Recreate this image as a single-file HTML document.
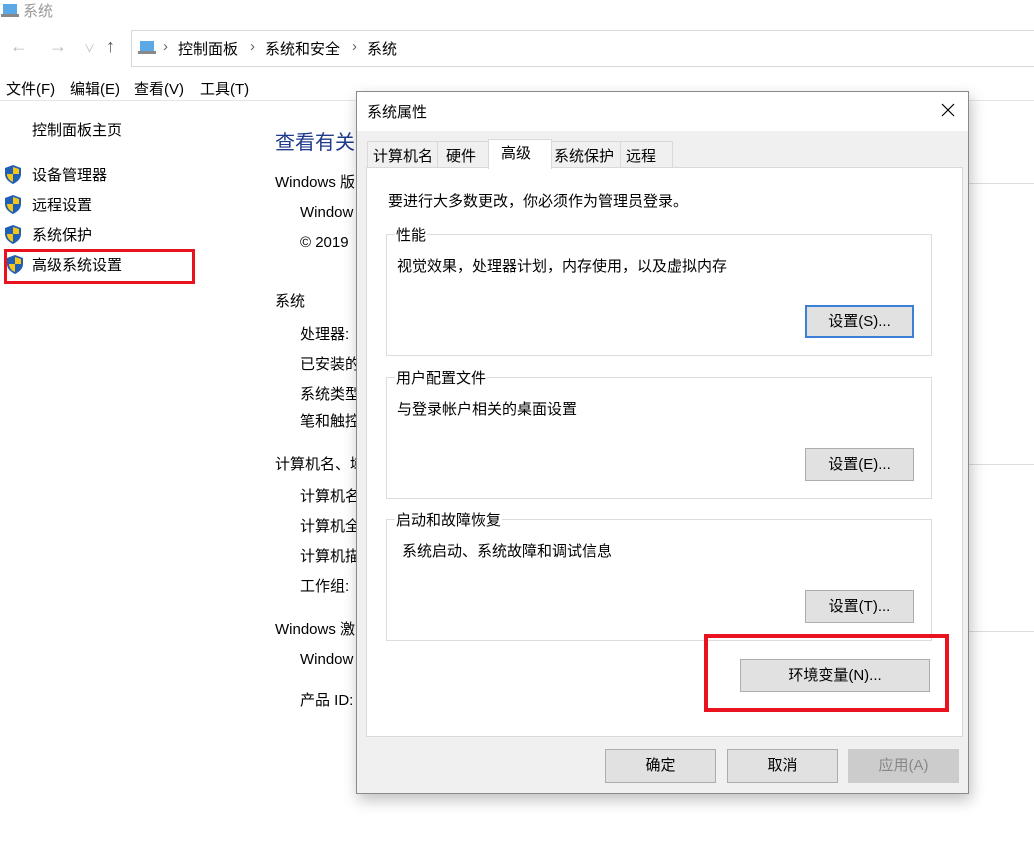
<!DOCTYPE html>
<html><head><meta charset="utf-8"><style>
*{margin:0;padding:0;box-sizing:border-box}
body{width:1034px;height:853px;background:#fff;position:relative;overflow:hidden;font-family:"Liberation Sans","Noto Sans CJK SC",sans-serif;font-size:15px;color:#000}
.a{position:absolute;white-space:nowrap}
.g{color:#999}
.btn{position:absolute;background:#e1e1e1;border:1px solid #adadad;text-align:center;font-size:15px}
.hl{position:absolute;height:1px;background:#ddd}
.grp{position:absolute;border:1px solid #dcdcdc}
.grp .lg{position:absolute;top:-11px;left:8px;background:#fff;padding:0 1px}
.shield{position:absolute;width:18px;height:20px}
</style></head><body>
<svg class="a" style="left:0;top:2px" width="22" height="18"><rect x="3" y="2" width="14" height="10" fill="#5aa9e6"/><rect x="1" y="12" width="18" height="3" fill="#888"/></svg>
<div class="a g" style="left:23px;top:0px">系统</div>
<div class="a" style="left:10px;top:36px;color:#bbb;font-size:18px">←</div>
<div class="a" style="left:49px;top:36px;color:#bbb;font-size:18px">→</div>
<div class="a" style="left:84px;top:40px;color:#bbb;font-size:11px">∨</div>
<div class="a" style="left:106px;top:36px;color:#555;font-size:18px">↑</div>
<div class="a" style="left:131px;top:30px;width:910px;height:37px;border:1px solid #d9d9d9"></div>
<svg class="a" style="left:136px;top:39px" width="22" height="18"><rect x="4" y="2" width="14" height="10" fill="#5aa9e6"/><rect x="2" y="12" width="18" height="3" fill="#888"/></svg>
<div class="a" style="left:163px;top:38px;color:#666">›</div>
<div class="a" style="left:178px;top:38px">控制面板</div>
<div class="a" style="left:250px;top:38px;color:#666">›</div>
<div class="a" style="left:265px;top:38px">系统和安全</div>
<div class="a" style="left:352px;top:38px;color:#666">›</div>
<div class="a" style="left:367px;top:38px">系统</div>
<div class="a" style="left:6px;top:78px">文件(F)</div>
<div class="a" style="left:70px;top:78px">编辑(E)</div>
<div class="a" style="left:134px;top:78px">查看(V)</div>
<div class="a" style="left:200px;top:78px">工具(T)</div>
<div class="hl" style="left:0;top:100px;width:1034px;background:#e5e5e5"></div>
<div class="a" style="left:32px;top:119px">控制面板主页</div>
<svg width="0" height="0"><defs><g id="sh"><path d="M9 1 L17 4 L17 10 C17 15 13 18 9 20 C5 18 1 15 1 10 L1 4 Z" fill="#1f5fb8"/><path d="M9 3 L9 10 L15 10 L15 5 Z" fill="#f5c518"/><path d="M9 10 L3 10 C3 14 6 17 9 18 Z" fill="#f5c518"/></g></defs></svg>
<svg class="shield" style="left:4px;top:164px"><use href="#sh"/></svg>
<svg class="shield" style="left:4px;top:194px"><use href="#sh"/></svg>
<svg class="shield" style="left:4px;top:224px"><use href="#sh"/></svg>
<svg class="shield" style="left:6px;top:254px"><use href="#sh"/></svg>
<div class="a" style="left:32px;top:164px">设备管理器</div>
<div class="a" style="left:32px;top:194px">远程设置</div>
<div class="a" style="left:32px;top:224px">系统保护</div>
<div class="a" style="left:32px;top:254px">高级系统设置</div>
<div class="a" style="left:4px;top:249px;width:191px;height:35px;border:3px solid #e8131f"></div>
<div class="a" style="left:275px;top:126px;font-size:20px;color:#1e3a8a">查看有关</div>
<div class="a" style="left:275px;top:171px">Windows 版</div>
<div class="a" style="left:300px;top:204px">Window</div>
<div class="a" style="left:300px;top:234px">© 2019</div>
<div class="a" style="left:275px;top:290px">系统</div>
<div class="a" style="left:300px;top:323px">处理器:</div>
<div class="a" style="left:300px;top:353px">已安装的</div>
<div class="a" style="left:300px;top:383px">系统类型</div>
<div class="a" style="left:300px;top:410px">笔和触控</div>
<div class="a" style="left:275px;top:453px">计算机名、域</div>
<div class="a" style="left:300px;top:485px">计算机名</div>
<div class="a" style="left:300px;top:515px">计算机全</div>
<div class="a" style="left:300px;top:545px">计算机描</div>
<div class="a" style="left:300px;top:575px">工作组:</div>
<div class="a" style="left:275px;top:618px">Windows 激</div>
<div class="a" style="left:300px;top:651px">Window</div>
<div class="a" style="left:300px;top:689px">产品 ID:</div>
<div class="hl" style="left:940px;top:183px;width:94px"></div>
<div class="hl" style="left:940px;top:464px;width:94px"></div>
<div class="hl" style="left:940px;top:631px;width:94px"></div>
<!-- dialog -->
<div class="a" style="left:356px;top:91px;width:613px;height:703px;background:#f0f0f0;border:1px solid #8a8a8a;box-shadow:2px 6px 14px rgba(0,0,0,.25)">
 <div class="a" style="left:0;top:0;width:611px;height:39px;background:#fff"></div>
 <div class="a" style="left:10px;top:9px">系统属性</div>
 <svg class="a" style="left:584px;top:11px" width="14" height="14"><path d="M1 1 L13 13 M13 1 L1 13" stroke="#000" stroke-width="1.2"/></svg>
 <div class="a" style="left:10px;top:49px;width:225px;height:26px;border:1px solid #d9d9d9;border-bottom:none;background:#f0f0f0"></div>
 <div class="a" style="left:16px;top:53px">计算机名</div>
 <div class="a" style="left:80px;top:49px;width:1px;height:26px;background:#d9d9d9"></div>
 <div class="a" style="left:89px;top:53px">硬件</div>
 <div class="a" style="left:139px;top:49px;width:1px;height:26px;background:#d9d9d9"></div>
 <div class="a" style="left:194px;top:49px;width:122px;height:26px;border:1px solid #d9d9d9;border-bottom:none;background:#f0f0f0"></div>
 <div class="a" style="left:197px;top:53px">系统保护</div>
 <div class="a" style="left:263px;top:49px;width:1px;height:26px;background:#d9d9d9"></div>
 <div class="a" style="left:269px;top:53px">远程</div>
 <div class="a" style="left:9px;top:75px;width:597px;height:570px;background:#fff;border:1px solid #d9d9d9"></div>
 <div class="a" style="left:131px;top:47px;width:64px;height:30px;background:#fff;border:1px solid #d9d9d9;border-bottom:none"></div>
 <div class="a" style="left:144px;top:50px">高级</div>
 <div class="a" style="left:31px;top:98px">要进行大多数更改，你必须作为管理员登录。</div>
 <div class="grp" style="left:29px;top:142px;width:546px;height:122px"><span class="lg">性能</span></div>
 <div class="a" style="left:40px;top:163px">视觉效果，处理器计划，内存使用，以及虚拟内存</div>
 <div class="btn" style="left:448px;top:213px;width:109px;height:33px;border:2px solid #3c7fd6;line-height:29px">设置(S)...</div>
 <div class="grp" style="left:29px;top:285px;width:546px;height:122px"><span class="lg">用户配置文件</span></div>
 <div class="a" style="left:40px;top:306px">与登录帐户相关的桌面设置</div>
 <div class="btn" style="left:448px;top:356px;width:109px;height:33px;line-height:31px">设置(E)...</div>
 <div class="grp" style="left:29px;top:427px;width:546px;height:122px"><span class="lg">启动和故障恢复</span></div>
 <div class="a" style="left:45px;top:448px">系统启动、系统故障和调试信息</div>
 <div class="btn" style="left:448px;top:498px;width:109px;height:33px;line-height:31px">设置(T)...</div>
 <div class="btn" style="left:383px;top:567px;width:190px;height:33px;line-height:31px">环境变量(N)...</div>
 <div class="btn" style="left:248px;top:657px;width:111px;height:34px;line-height:32px">确定</div>
 <div class="btn" style="left:370px;top:657px;width:111px;height:34px;line-height:32px">取消</div>
 <div class="btn" style="left:491px;top:657px;width:111px;height:34px;line-height:32px;background:#ccc;border-color:#ccc;color:#888">应用(A)</div>
</div>
<div class="a" style="left:704px;top:634px;width:245px;height:78px;border:4px solid #e8131f"></div>
</body></html>
